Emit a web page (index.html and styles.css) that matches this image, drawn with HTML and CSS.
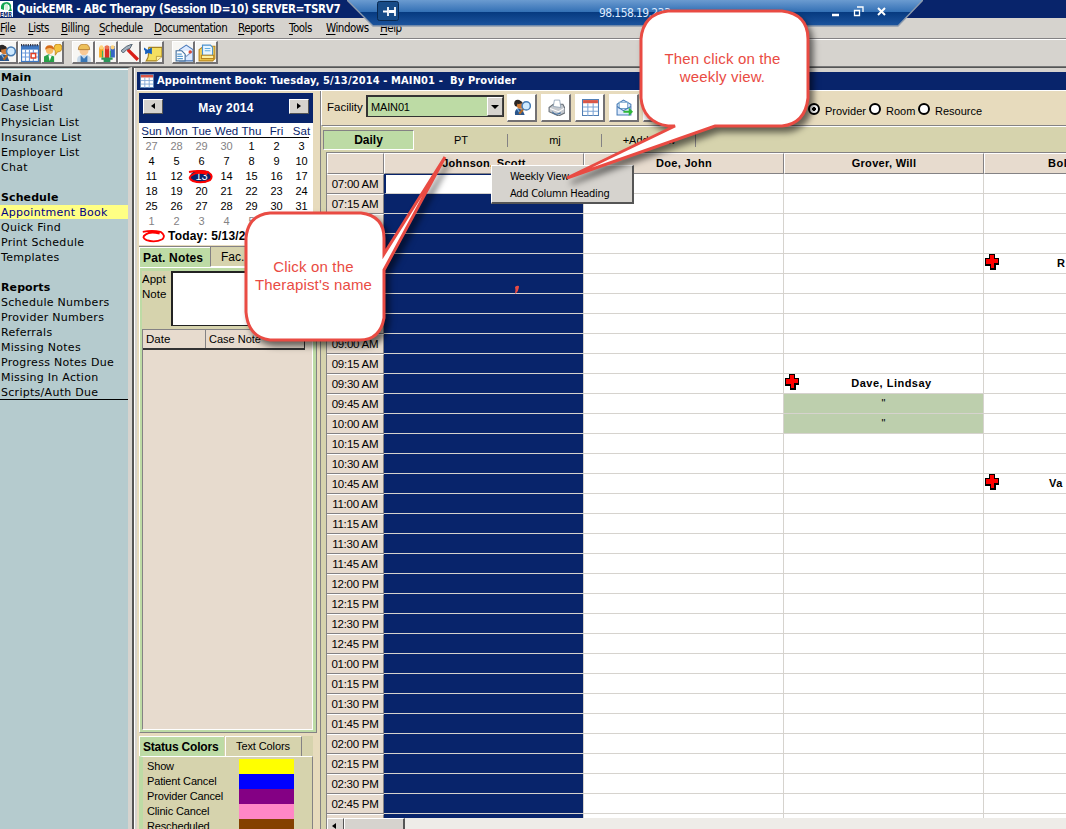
FILE: index.html
```html
<!DOCTYPE html>
<html lang="en">
<head>
<meta charset="utf-8">
<title>QuickEMR - ABC Therapy</title>
<link rel="stylesheet" href="styles.css">
</head>
<body>
<svg class="defs" width="0" height="0" aria-hidden="true">
  <symbol id="find" viewBox="0 0 16 16"><circle cx="3.500" cy="4" r="3.300" fill="#2b2624"/><circle cx="6" cy="6" r="3.200" fill="#d07a35"/><path d="M3 5q0-4 4-3l1 2z" fill="#2b2624"/><path d="M1 15q-1-5 3-6l4 1 2 5z" fill="#29558c"/><path d="m3 9 3 5" stroke="#7fb6e6"/><path d="m9 9-4 5" stroke="#b46a25" stroke-width="2"/><circle cx="11.500" cy="6.500" r="3.900" fill="#cfeaff" stroke="#477cb4" stroke-width="1.400"/></symbol>
  <symbol id="cal" viewBox="0 0 16 16"><path d="M0 1h16v15H0z" fill="#3e78c3"/><path d="M1 5h14v10H1z" fill="#fff"/><path d="M0 1h16" stroke="#334" stroke-width="2" stroke-dasharray="1 1"/><path d="M1 8h14M1 11.500h14M4 5v10M7.500 5v10M11 5v10" stroke="#6d9bdc" stroke-width="1"/><path d="M9 8.500h4v4H9z" fill="#fff" stroke="#e33d22" stroke-width="1.300"/></symbol>
  <symbol id="talk" viewBox="0 0 16 16"><path d="M0 16v-5l4-2 5 2v5z" fill="#27a148"/><circle cx="5" cy="5.500" r="3.300" fill="#f7ba65"/><path d="M1 5Q1 1 5 1t4 4Q5 2 1 5" fill="#d66b17"/><path d="M9 3q0-3 3.500-3T16 3q0 4-4 4l-2 3V6Q9 6 9 3" fill="#f4c33d" stroke="#bd831c" stroke-width=".7"/><path d="m4 10 1 5 2-5" fill="#fff"/></symbol>
  <symbol id="worker" viewBox="0 0 16 16"><circle cx="8" cy="6" r="4" fill="#f8c995"/><path d="M3 5q0-5 5-5t5 5z" fill="#edc05a" stroke="#af742b" stroke-width=".7"/><path d="M2 16q-1-6 4-6h4q5 0 4 6z" fill="#c6d8e8"/><path d="M5 10v6h6v-6l-3 3z" fill="#3876b5"/></symbol>
  <symbol id="people" viewBox="0 0 16 16"><path d="M1 3h4v9H1z" fill="#f6aa24"/><path d="M6 2h4v11H6z" fill="#da2c22"/><path d="M11 2h4v10h-4z" fill="#3566c5"/><circle cx="3" cy="3" r="1.800" fill="#ffd27a"/><circle cx="8" cy="3" r="1.800" fill="#eb744f"/><circle cx="13" cy="3" r="1.800" fill="#ffd27a"/><path d="M3 13h10M8 12v3M5 15h6" stroke="#2b955b" stroke-width="2"/><path d="M4 6v6M11 6v6" stroke="#3db15c"/></symbol>
  <symbol id="hammer" viewBox="0 0 16 16"><path d="m6 5 9 9" stroke="#d91e16" stroke-width="3"/><path d="m0 6 5-4 5-2-2 4-3 1-3 3z" fill="#a5b2bf" stroke="#4b5968" stroke-width=".8"/></symbol>
  <symbol id="note" viewBox="0 0 16 16"><path d="M4 3h12v8l-5 4H2q3-4 2-12" fill="#f5df60" stroke="#a98421"/><path d="M11 15v-4h5" fill="#fff2a4" stroke="#a98421" stroke-width=".6"/><path d="m0 3 3 2 4-2v6L4 8 1 9V6l-1-1z" fill="#1760be"/></symbol>
  <symbol id="mail" viewBox="0 0 16 16"><path d="M4 5 10 1l6 4v10H4z" fill="#dceaff" stroke="#4978ba"/><path d="m4 6 6 5 6-5" fill="#fff" stroke="#7f9ac5"/><path d="M1 6h5l3 3v6H1z" fill="#fff" stroke="#45709f"/><path d="M2 9h4M2 11h5M2 13h5" stroke="#599ad0"/><circle cx="13.500" cy="7" r="1.500" fill="#dc4836"/></symbol>
  <symbol id="file" viewBox="0 0 16 16"><path d="M1 5 5 2h10v11l-2 2H1z" fill="#f6d155" stroke="#b9861e"/><path d="M4 1h7l2 2v7H4z" fill="#e9f6ff" stroke="#4b92cf"/><path d="M6 4h5M6 6h5" stroke="#66aedf"/><path d="M3 10h11v3H3z" fill="#fff0a0" stroke="#b9861e"/></symbol>
  <symbol id="printer" viewBox="0 0 16 16"><path d="m1 8 4-3h9l2 4v4l-6 3-9-4z" fill="#c5c9cf" stroke="#687078"/><path d="m5 7 1-6 5 0 1 7z" fill="#fff" stroke="#8297ad" stroke-width=".7"/><path d="m2 9 8 3 5-3" fill="none" stroke="#fff"/><path d="M4 12q3 4 8 1" stroke="#3b6ba0" fill="none"/></symbol>
  <symbol id="table" viewBox="0 0 16 16"><path d="M.5.5h15v15H.5z" fill="#fff" stroke="#527fb4"/><path d="M1 1h14v3H1z" fill="#d95647"/><path d="M1 7.500h14M1 11.500h14M5.500 4v12M10.500 4v12" stroke="#7fa6d5"/></symbol>
  <symbol id="send" viewBox="0 0 16 16"><path d="m1 5 6-4 7 4v10H1z" fill="#ddeafc" stroke="#477bb6"/><path d="M3 3h8v6H3z" fill="#fff" stroke="#79a7cc"/><path d="m1 7 6 4 7-4" fill="none" stroke="#477bb6"/><path d="M7 11h5V8l4 4-4 4v-3H7z" fill="#2fb738"/></symbol>
  <symbol id="cross" viewBox="0 0 15 16"><path d="M4 0h6v4h4v7h-3v5H5v-4H0V4h4z" fill="#000"/><path d="M5 1h4v4h4v4H9v5H6V10H1V5h4z" fill="#f00"/></symbol>
  <symbol id="ring" viewBox="0 0 26 15"><path d="M1 3Q11 1 20 3q6 4 2 8-8 4-17 1-6-3-1-6 5-4 15-1" fill="none" stroke="#f00" stroke-width="2"/></symbol>
</svg>

<div class="app">
  <header class="titlebar">
    <svg class="logo" viewBox="0 0 13 17"><path d="M0 1h13v16H0z" fill="#fff"/><path d="M1 9Q0 2 7 2q5 1 4 6l1 3H8q3-2 1-6-3-2-5 1v4" fill="#14a652"/><path d="M4 5q3-3 4 0v5H5z" fill="#d5f0dc"/><text x="0" y="16.500" textLength="12" lengthAdjust="spacingAndGlyphs" class="logo-text">EMR</text></svg>
    <span class="app-name">QuickEMR - ABC Therapy (Session ID=10) SERVER=TSRV7</span>
  </header>
  <nav class="menubar"><span><u>F</u>ile</span><span><u>L</u>ists</span><span><u>B</u>illing</span><span><u>S</u>chedule</span><span><u>D</u>ocumentation</span><span><u>R</u>eports</span><span><u>T</u>ools</span><span><u>W</u>indows</span><span><u>H</u>elp</span></nav>
  <div class="toolbar">
    <div class="tools"><b><svg><use href="#find"/></svg></b><b><svg><use href="#cal"/></svg></b><b><svg><use href="#talk"/></svg></b></div>
    <div class="tools"><b><svg><use href="#worker"/></svg></b><b><svg><use href="#people"/></svg></b><b><svg><use href="#hammer"/></svg></b><b><svg><use href="#note"/></svg></b></div>
    <div class="tools"><b><svg><use href="#mail"/></svg></b><b><svg><use href="#file"/></svg></b></div>
  </div>

  <div class="workspace">
    <aside class="sidebar">
      <ul>
        <li class="head">Main</li><li>Dashboard</li><li>Case List</li><li>Physician List</li><li>Insurance List</li><li>Employer List</li><li>Chat</li><li></li>
        <li class="head">Schedule</li><li class="active">Appointment Book</li><li>Quick Find</li><li>Print Schedule</li><li>Templates</li><li></li>
        <li class="head">Reports</li><li>Schedule Numbers</li><li>Provider Numbers</li><li>Referrals</li><li>Missing Notes</li><li>Progress Notes Due</li><li>Missing In Action</li><li>Scripts/Auth Due</li>
      </ul>
    </aside>
    <main class="window">
      <div class="window-title"><svg class="i14"><use href="#table"/></svg><span>Appointment Book: Tuesday, 5/13/2014 - MAIN01 -&nbsp; By Provider</span></div>
      <div class="panes">
        <section class="left">
          <div class="calendar">
            <div class="month"><b class="arrow"><i class="tri-l"></i></b><span>May 2014</span><b class="arrow"><i class="tri-r"></i></b></div>
            <div class="week names"><span>Sun</span><span>Mon</span><span>Tue</span><span>Wed</span><span>Thu</span><span>Fri</span><span>Sat</span></div>
            <div class="week days" id="days"></div>
            <div class="today"><svg class="ring"><use href="#ring"/></svg><span>Today: 5/13/2014</span></div>
          </div>
          <div class="tabs notes-tabs"><span class="tab on">Pat. Notes</span><span class="tab fac">Fac. Notes</span></div>
          <div class="notes">
            <div class="appt"><span>Appt<br>Note</span><div class="textarea"></div></div>
            <div class="list"><div class="list-head"><span>Date</span><span>Case Note</span></div></div>
          </div>
          <div class="tabs status-tabs"><span class="tab on">Status Colors</span><span class="tab text-colors">Text Colors</span></div>
          <div class="statuses">
            <div><span>Show</span><i class="yellow"></i></div><div><span>Patient Cancel</span><i class="blue"></i></div><div><span>Provider Cancel</span><i class="purple"></i></div><div><span>Clinic Cancel</span><i class="pink"></i></div><div><span>Rescheduled</span><i class="brown"></i></div>
          </div>
        </section>
        <section class="book">
          <div class="filters">
            <span class="facility">Facility</span>
            <div class="select"><span>MAIN01</span><b><i class="tri-d"></i></b></div>
            <div class="book-tools"><b><svg><use href="#find"/></svg></b><b><svg><use href="#printer"/></svg></b><b><svg><use href="#table"/></svg></b><b><svg><use href="#send"/></svg></b><b></b></div>
            <div class="radios"><i class="radio sel"></i><span>Provider</span><i class="radio"></i><span>Room</span><i class="radio"></i><span>Resource</span></div>
          </div>
          <div class="views"><span class="daily">Daily</span><span>PT</span><span>mj</span><span>+Add View</span></div>
          <div class="grid-wrap">
            <div class="grid" id="grid"></div>
            <div class="scroll"><b><i class="tri-l"></i></b><b class="thumb"></b></div>
          </div>
        </section>
      </div>
    </main>
  </div>

  <div class="context"><span>Weekly View</span><span>Add Column Heading</span></div>

  <svg class="remote" width="576" height="28" viewBox="347 0 576 28">
    <defs><linearGradient id="rb" x1="0" y1="0" x2="0" y2="1"><stop offset="0" stop-color="#6b9bd0"/><stop offset=".46" stop-color="#3370b5"/><stop offset=".47" stop-color="#063a80"/><stop offset="1" stop-color="#1d559f"/></linearGradient></defs>
    <path d="M347 0h576l-25 26H373z" fill="url(#rb)"/><path d="m347 0 26 26h525l25-26" fill="none" stroke="#8f9cae" stroke-width="1.300"/>
    <rect x="377.500" y="1.500" width="21" height="19" rx="2" fill="#174b87" stroke="#09284f"/>
    <path d="M383 11.500h5M388 7v9M395 7v9" stroke="#fff" stroke-width="1.800"/><path d="M389 10h6v3h-6z" fill="#fff"/>
    <text x="599" y="17" class="ip">98.158.19.233</text>
    <path d="M832 15h7" stroke="#fff" stroke-width="2.500"/><path d="M857 7h6v5M854.500 10.500h5v5h-5z" fill="none" stroke="#fff" stroke-width="1.300"/><path d="m878 8 7 7m0-7-7 7" stroke="#fff" stroke-width="2"/>
  </svg>

  <svg class="callouts" width="1066" height="829" viewBox="0 0 1066 829">
    <g class="bubble">
      <path d="M270 213H361Q384 216 384 238V254L445 157 384 270V318Q380 340 360 340H270Q248 337 246 312V238Q248 215 270 213Z"/>
      <path d="M668 11H782Q808 14 808 39V98Q805 124 782 126H715L567 178 675 126H668Q643 122 641 98V39Q643 14 668 11Z"/>
    </g>
    <path d="M515 287q2-2 4-1 0 5-4 8 1-4 0-7z" fill="#ea4b43"/>
  </svg>
  <div class="say first">Click on the<br>Therapist's name</div>
  <div class="say second">Then click on the<br>weekly view.</div>
</div>
<script src="app.js"></script>
</body>
</html>
```
FILE: styles.css
```css
* { box-sizing: border-box; }
body { margin: 0; background: #d6d3ce; font: 11px/15px "Liberation Sans", Arial, sans-serif; color: #000; }
ul { margin: 0; padding: 0; list-style: none; }
.defs { display: block; position: absolute; }
.app { position: relative; width: 1066px; height: 829px; overflow: hidden; display: flex; flex-direction: column; }
.titlebar { height: 18px; flex: none; background: #08246b; color: #fff; display: flex; gap: 4px; font: bold 11.5px/18px "DejaVu Sans Condensed", "DejaVu Sans", sans-serif; white-space: nowrap; }
.logo { width: 13px; height: 17px; }
.logo-text { font: bold 7px "DejaVu Sans", sans-serif; fill: #08246b; }
.app-name { letter-spacing: -.26px; }
.menubar { height: 21px; flex: none; padding-top: 2px; display: grid; grid-template-columns: 28px 33px 38px 55px 84px 51px 37px 54px 40px; border-bottom: 1px solid #848284; font: 11.5px/16px "DejaVu Sans Condensed", "DejaVu Sans", sans-serif; letter-spacing: -.5px; }
.menubar u { text-underline-offset: 2px; }
.toolbar { height: 28px; flex: none; border-top: 1px solid #fff; border-bottom: 1px solid #777; padding-top: 1px; display: flex; gap: 8px; margin-left: -5px; }
.tools { display: flex; }
.tools b { width: 23px; height: 23px; padding: 2px; background: #f7f6f3; border: 1px solid #fff; border-right: 2px solid #737173; border-bottom: 2px solid #737173; }
.tools svg { display: block; width: 18px; height: 18px; }
.workspace { flex: 1; display: flex; min-height: 0; }
.sidebar { width: 132px; flex: none; background: #b5cbce; border-top: 1px solid #444; border-right: 4px solid #d6d3ce; font: 11px/15px "DejaVu Sans", sans-serif; letter-spacing: .28px; }
.sidebar ul { margin-top: 1px; border-top: 1px solid #fff; border-bottom: 1px solid #000; padding: 0 1px; width: 128px; height: 331px; }
.sidebar li { height: 15px; white-space: nowrap; }
.sidebar .head { font-weight: bold; letter-spacing: .1px; }
.sidebar .active { background: #ffff84; color: #000084; margin: 0 -1px; padding: 0 1px; height: 14px; margin-bottom: 1px; line-height: 16px; }
.window { width: 934px; border-left: 2px solid #555; border-top: 1px solid #555; padding: 4px 0 0 3px; display: flex; flex-direction: column; background: linear-gradient(90deg, #fff 1px, #d6d3ce 1px); }
.window-title { height: 18px; flex: none; background: #08246b; color: #fff; font: bold 11px/18px "DejaVu Sans Condensed", "DejaVu Sans", sans-serif; display: flex; gap: 3px; padding-left: 3px; white-space: nowrap; letter-spacing: .13px; }
.i14 { width: 14px; height: 14px; margin-top: 2px; }
.panes { flex: 1; display: flex; min-height: 0; border-top: 1px solid #fff; }
.left { width: 184px; padding: 2px 0 0 2px; background: #e7dbbd; border-right: 1px solid #848284; display: flex; flex-direction: column; }
.calendar { height: 152px; flex: none; width: 174px; background: #fff; }
.month { height: 30px; background: #08246b; color: #fff; display: flex; justify-content: space-between; align-items: center; padding: 0 4px; font-weight: bold; font-size: 12px; letter-spacing: .25px; }
.arrow { width: 20px; height: 15px; margin-top: -4px; background: #d6d3ce; border: 1px solid #fff; border-right-color: #555; border-bottom-color: #555; display: grid; place-items: center; }
.tri-l, .tri-r { border: 3px solid transparent; width: 0; height: 0; }
.tri-l { border-right: 4px solid #000; border-left: 0; }
.tri-r { border-left: 4px solid #000; border-right: 0; }
.tri-d { width: 0; border: 4px solid transparent; border-top-color: #000; border-bottom: 0; }
.week { display: grid; grid-template-columns: repeat(7, 25px); text-align: center; }
.names { height: 15px; margin: 0 4px; padding-top: 1px; color: #08246b; border-bottom: 1px solid #000; grid-template-columns: 17px 33px 17px 33px 17px 33px 17px; justify-content: space-between; white-space: nowrap; line-height: 14px; font-size: 11.5px; }
.names span { margin: 0 -4px; }
.days { font-size: 11px; width: 175px; line-height: 15px; padding-top: 1px; }
.days .off { color: #848284; }
.days .now { position: relative; color: #fff; }
.days .now::before { content: ""; position: absolute; z-index: 0; left: 1px; top: 1px; width: 22px; height: 13px; border-radius: 50%; background: #08246b; }
.days .now span { position: relative; }
.days .now svg { position: absolute; left: -1px; top: 0; width: 26px; height: 15px; }
.ring { width: 26px; height: 14px; }
.today { padding-left: 2px; display: flex; gap: 1px; font: bold 12px/15px "Liberation Sans", sans-serif; letter-spacing: .2px; white-space: nowrap; }
.tabs { display: flex; flex: none; background: #d6d3ad; white-space: nowrap; }
.tab { height: 20px; line-height: 20px; }
.on { background: #bddba5; font-weight: bold; font-size: 12px; letter-spacing: .15px; border-left: 1px solid #fff; border-top: 1px solid #fff; padding-left: 3px; }
.notes-tabs { margin-top: 1px; border-top: 1px solid #848284; height: 21px; width: 174px; }
.notes-tabs .on { width: 71px; }
.fac { padding-left: 10px; flex: 1; border-left: 1px solid #848284; border-bottom: 1px solid #fff; font-size: 12px; }
.notes { flex: none; height: 466px; width: 178px; padding: 3px 3px 3px 2px; background: #bddba5; border: 1px solid #fff; border-right-color: #848284; border-bottom-color: #848284; }
.appt { display: flex; height: 58px; background: #d6d3ad; line-height: 15px; font-size: 11.5px; }
.appt > span { width: 29px; padding-top: 1px; }
.textarea { width: 134px; height: 55px; background: #fff; border: 1px solid #222; border-width: 2px 1px 1px 2px; }
.list { height: 401px; background: #e7dbce; border: 1px solid #848284; border-right-color: #fff; border-bottom-color: #fff; }
.list-head { width: 162px; height: 20px; display: flex; line-height: 19px; border-bottom: 2px solid #333; border-right: 1px solid #333; }
.list-head span { padding-left: 3px; }
.list-head span:first-child { width: 63px; border-right: 1px solid #848284; font-size: 11.5px; }
.status-tabs { margin-top: 3px; width: 174px; height: 20px; }
.status-tabs .on { width: 85px; letter-spacing: -.2px; }
.text-colors { width: 77px; padding-left: 10px; border: 1px solid #fff; border-right: 1px solid #848284; margin-left: 1px; border-bottom: 0; line-height: 19px; letter-spacing: -.1px; }
.statuses { flex: 1; width: 174px; overflow: hidden; background: #d6d3ad; border-left: 4px solid #bddba5; border-right: 1px solid #848284; border-top: 1px solid #fff; padding: 2px 4px 0; }
.statuses div { display: flex; height: 15px; }
.statuses span { width: 92px; white-space: nowrap; letter-spacing: -.15px; }
.statuses i { width: 55px; height: 15px; }
.yellow { background: #ff0; }
.blue { background: #00f; }
.purple { background: #840084; }
.pink { background: #ff86c6; }
.brown { background: #844100; }
.book { flex: 1; min-width: 0; display: flex; flex-direction: column; background: #d6d3ad; border-left: 2px solid #d6d3ad; }
.filters { height: 35px; flex: none; margin-left: -2px; padding: 3px 0 0 5px; border-left: 1px solid #fff; border-bottom: 1px solid #848284; background: #e7dbbd; display: flex; }
.facility { width: 39px; line-height: 26px; font-size: 11.5px; }
.select { width: 138px; height: 22px; margin-top: 1px; border: 2px solid #333; background: #bddba5; display: flex; justify-content: space-between; line-height: 20px; padding-left: 3px; border-right-width: 1px; border-bottom-width: 1px; letter-spacing: -.15px; }
.select b { width: 16px; background: #d6d3ce; border: 1px solid #fff; border-right-color: #444; border-bottom-color: #444; display: grid; place-items: center; }
.book-tools { display: flex; gap: 4px; margin-left: 3px; }
.book-tools b { width: 30px; height: 28px; background: #fff; border: 1px solid #fff; border-right: 2px solid #737173; border-bottom: 2px solid #737173; padding: 4px 6px; }
.book-tools svg { width: 17px; height: 17px; display: block; }
.radios { display: flex; margin-left: 135px; padding-top: 9px; white-space: nowrap; }
.radios span { padding-left: 5px; line-height: 16px; }
.radios span:nth-of-type(1) { width: 49px; }
.radios span:nth-of-type(2) { width: 37px; }
.radio { width: 12px; height: 12px; border: 2px solid #000; border-radius: 50%; background: #fff; }
.sel { background: radial-gradient(circle, #000 1.6px, #fff 2.2px); }
.views { height: 26px; flex: none; display: flex; padding-top: 3px; line-height: 20px; text-align: center; border-top: 1px solid #fff; }
.views span { width: 94px; height: 20px; position: relative; }
.views span:not(.daily)::after { content: ""; position: absolute; right: 0; top: 4px; height: 13px; border-right: 1px solid #848284; }
.views .daily { width: 91px; height: 20px; background: #bddba5; font-weight: bold; font-size: 12px; border: 1px solid #848284; border-right-color: #fff; border-bottom-color: #fff; line-height: 19px; }
.grid-wrap { flex: 1; margin-left: 3px; min-height: 0; border-left: 1px solid #848284; border-top: 1px solid #848284; display: flex; flex-direction: column; }
.grid { height: 665px; flex: none; overflow: hidden; background: #fff; }
.row { display: grid; grid-template-columns: 57px 200px 200px 200px 200px; height: 20px; width: 857px; text-align: center; line-height: 18px; font-weight: bold; }
.row > * { border-right: 1px solid #d6d3ce; border-bottom: 1px solid #d6d3ce; position: relative; height: 20px; min-width: 0; }
.row .time { background: #e7dbce; border-color: #848284; border-top: 1px solid #fff; line-height: 18px; font-weight: normal; font-size: 11.5px; letter-spacing: -.25px; }
.row .selcol { background: #08246b; border-bottom: 1px solid #d6d3ce; }
.row .first { background: #fff; border: 2px solid #08246b; border-top-width: 1px; border-bottom: 1px solid #d6d3ce; }
.row .busy { background: #bdcfad; font-weight: normal; }
.header { height: 21px; }
.header > * { height: 21px; background: #e7dbce; border-color: #848284; border-top: 1px solid #fff; border-left: 1px solid #fff; line-height: 19px; letter-spacing: .3px; }
.row svg { position: absolute; left: 1px; top: 0; width: 15px; height: 16px; }
.row .name { padding-left: 16px; letter-spacing: .5px; }
.row .edge { text-align: left; padding-left: 73px; letter-spacing: .5px; white-space: nowrap; }
.row .va { padding-left: 65px; }
.header .edge { padding-left: 63px; }
.scroll { flex: 1; display: flex; background: #eeece8; }
.scroll b { width: 17px; height: 17px; background: #d6d3ce; border: 1px solid #fff; border-right: 1px solid #555; padding: 4px; line-height: 0; }
.scroll i { display: block; }
.scroll .thumb { width: 61px; border-right: 2px solid #555; }
.context { position: absolute; left: 491px; top: 165px; width: 143px; height: 39px; background: #d6d3ce; border: 1px solid #fff; border-right: 2px solid #555; border-bottom: 2px solid #555; padding: 2px 0 0 18px; display: flex; flex-direction: column; font: 11px/17px "DejaVu Sans Condensed", "DejaVu Sans", sans-serif; white-space: nowrap; letter-spacing: -.28px; }
.remote { position: absolute; left: 347px; top: 0; }
.ip { font: 12px "DejaVu Sans Condensed", sans-serif; fill: #dceaff; letter-spacing: -.6px; }
.callouts { position: absolute; left: 0; top: 0; }
.bubble { fill: #fff; stroke: #e94b43; stroke-width: 3; filter: drop-shadow(4px 5px 3px rgba(0, 0, 0, .55)); }
.say { position: absolute; color: #e94b43; font: 15px/18px "Liberation Sans", Arial, sans-serif; letter-spacing: .16px; text-align: center; white-space: nowrap; }
.say.first { left: 246px; top: 258px; width: 135px; }
.say.second { left: 641px; top: 50px; width: 163px; }
```
FILE: app.js
```js
const days = document.getElementById('days');
const numbers = [27, 28, 29, 30];
for (let d = 1; d <= 31; d++) numbers.push(d);
numbers.push(1, 2, 3, 4, 5, 6, 7);
numbers.forEach((n, i) => {
  const cell = document.createElement('div');
  if (i < 4 || i > 34) cell.className = 'off';
  if (i === 16) {
    cell.className = 'now';
    cell.innerHTML = '<span>13</span><svg><use href="#ring"/></svg>';
  } else cell.textContent = n;
  days.append(cell);
});

const cross = '<svg><use href="#cross"/></svg>';
const events = {
  '4-3': ['edge', cross + 'R'],
  '10-2': ['name', cross + 'Dave, Lindsay'],
  '11-2': ['busy', '"'],
  '12-2': ['busy', '"'],
  '15-3': ['edge va', cross + 'Va']
};
let html = '<div class="row header"><div></div><div>Johnson, Scott</div><div>Doe, John</div><div>Grover, Will</div><div class="edge">Bol</div></div>';
for (let r = 0; r < 33; r++) {
  const minutes = 420 + r * 15;
  const hour = Math.floor(minutes / 60);
  const label = r === 32 ? '' : String((hour + 11) % 12 + 1).padStart(2, '0') + ':' + String(minutes % 60).padStart(2, '0') + (hour < 12 ? ' AM' : ' PM');
  html += '<div class="row"><div class="time">' + label + '</div><div class="selcol' + (r === 0 ? ' first' : '') + '"></div>';
  for (let c = 1; c < 4; c++) {
    const e = events[r + '-' + c] || ['', ''];
    html += '<div class="' + e[0] + '">' + e[1] + '</div>';
  }
  html += '</div>';
}
document.getElementById('grid').innerHTML = html;
```
